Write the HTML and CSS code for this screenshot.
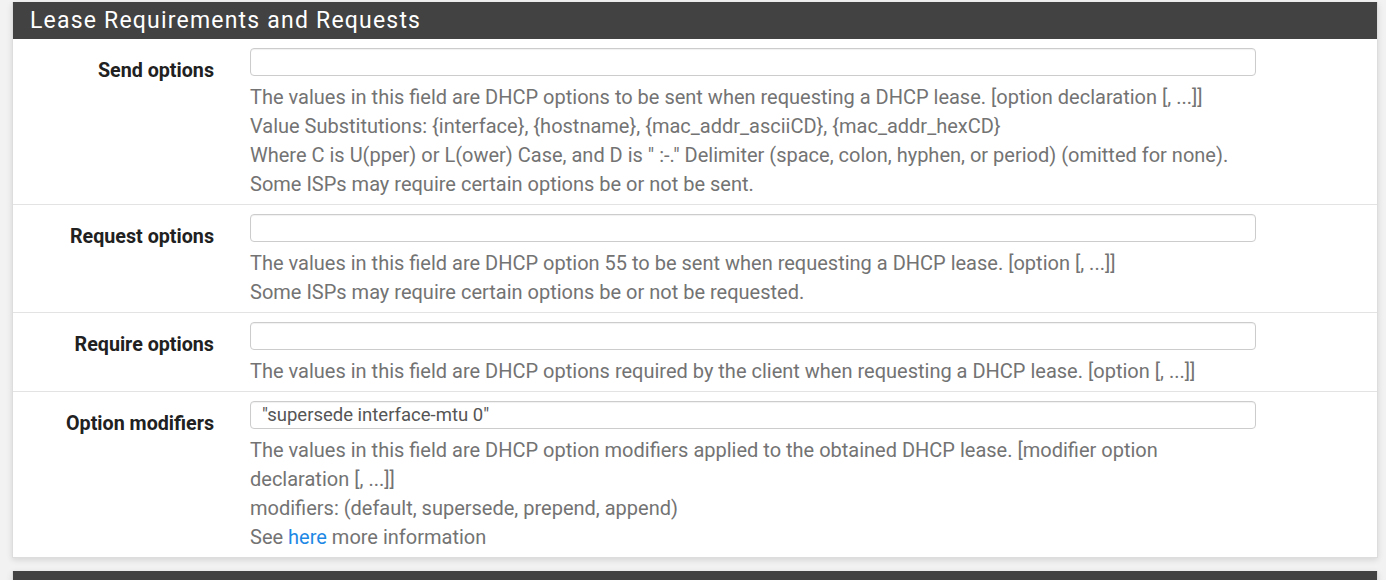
FILE: index.html
```html
<!DOCTYPE html>
<html lang="en">
<head>
    <meta charset="UTF-8">
    <meta name="viewport" content="width=device-width, initial-scale=1.0">
    <title>Lease Requirements and Requests</title>
    <link rel="stylesheet" href="styles.css">
</head>
<body>

    <div class="panel">
        <div class="panel-heading">Lease Requirements and Requests</div>

        <div class="form-row">
            <label class="row-label" for="send_options">Send options</label>
            <div class="row-field">
                <input type="text" id="send_options" class="form-input">
                <div class="help-text">
                    The values in this field are DHCP options to be sent when requesting a DHCP lease. [option declaration [, ...]]<br>
                    Value Substitutions: {interface}, {hostname}, {mac_addr_asciiCD}, {mac_addr_hexCD}<br>
                    Where C is U(pper) or L(ower) Case, and D is " :-." Delimiter (space, colon, hyphen, or period) (omitted for none).<br>
                    Some ISPs may require certain options be or not be sent.
                </div>
            </div>
        </div>

        <div class="form-row">
            <label class="row-label" for="request_options">Request options</label>
            <div class="row-field">
                <input type="text" id="request_options" class="form-input">
                <div class="help-text">
                    The values in this field are DHCP option 55 to be sent when requesting a DHCP lease. [option [, ...]]<br>
                    Some ISPs may require certain options be or not be requested.
                </div>
            </div>
        </div>

        <div class="form-row">
            <label class="row-label" for="required_options">Require options</label>
            <div class="row-field">
                <input type="text" id="required_options" class="form-input">
                <div class="help-text">
                    The values in this field are DHCP options required by the client when requesting a DHCP lease. [option [, ...]]
                </div>
            </div>
        </div>

        <div class="form-row">
            <label class="row-label" for="option_modifiers">Option modifiers</label>
            <div class="row-field">
                <input type="text" id="option_modifiers" class="form-input" value="&quot;supersede interface-mtu 0&quot;">
                <div class="help-text">
                    The values in this field are DHCP option modifiers applied to the obtained DHCP lease. [modifier option declaration [, ...]]<br>
                    modifiers: (default, supersede, prepend, append)<br>
                    See <a href="#">here</a> more information
                </div>
            </div>
        </div>
    </div>

    <div class="panel panel-next">
        <div class="panel-heading"></div>
    </div>

</body>
</html>
```

FILE: styles.css
```css
body {
    margin: 0;
    background-color: #f2f2f2;
    font-family: Roboto, "Liberation Sans", Arial, sans-serif;
    overflow: hidden;
}
.panel {
    margin: 2px 8px 13px 12px;
    background-color: #fff;
    border: 1px solid #ddd;
    border-top: none;
    box-shadow: 0 2px 6px rgba(0, 0, 0, 0.12);
}
.panel-heading {
    height: 37px;
    line-height: 38px;
    padding: 0 17px;
    background-color: #424242;
    color: #fff;
    font-size: 23px;
    letter-spacing: 1.2px;
}
.form-row {
    display: grid;
    grid-template-columns: 201px 1006px;
    column-gap: 36px;
    padding: 9px 0 5px 0;
    border-top: 1px solid #e3e3e3;
}
.panel-heading + .form-row { border-top: none; }
.row-label {
    padding-top: 8px;
    line-height: 29px;
    font-size: 19.7px;
    font-weight: bold;
    color: #212121;
    text-align: right;
}
.form-input {
    display: block;
    box-sizing: border-box;
    width: 100%;
    height: 28px;
    margin: 0;
    padding: 0 11px;
    border: 1px solid #ccc;
    border-radius: 4px;
    font-family: inherit;
    font-size: 18.5px;
    color: #555;
    box-shadow: inset 0 1px 1px rgba(0, 0, 0, 0.06);
}
.help-text {
    margin-top: 7px;
    font-size: 20px;
    line-height: 29px;
    color: #737373;
}
.help-text a { color: #1e88e5; text-decoration: none; }
```
